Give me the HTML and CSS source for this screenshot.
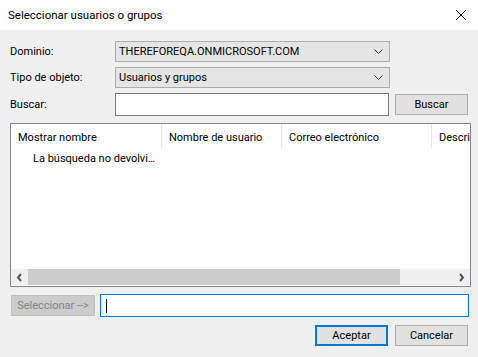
FILE: index.html
```
<!DOCTYPE html>
<html lang="es">
<head>
<meta charset="utf-8">
<title>Seleccionar usuarios o grupos</title>
<link rel="stylesheet" href="styles.css">
</head>
<body>
<div class="dialog">
  <div class="titlebar">
    <span class="title">Seleccionar usuarios o grupos</span>
    <svg class="close" width="12" height="12" viewBox="0 0 12 12"><path d="M1 1 L11 11 M11 1 L1 11" stroke="#000" stroke-width="1" fill="none"/></svg>
  </div>
  <div class="body">
    <div class="row row-combo">
      <span class="label">Dominio:</span>
      <div class="combo"><span class="combo-text">THEREFOREQA.ONMICROSOFT.COM</span><svg class="chev" width="9" height="5" viewBox="0 0 9 5"><path d="M0.5 0.5 L4.5 4.5 L8.5 0.5" stroke="#333" stroke-width="1" fill="none"/></svg></div>
    </div>
    <div class="row row-combo">
      <span class="label">Tipo de objeto:</span>
      <div class="combo"><span class="combo-text">Usuarios y grupos</span><svg class="chev" width="9" height="5" viewBox="0 0 9 5"><path d="M0.5 0.5 L4.5 4.5 L8.5 0.5" stroke="#333" stroke-width="1" fill="none"/></svg></div>
    </div>
    <div class="row row-search">
      <span class="label">Buscar:</span>
      <div class="input"></div>
      <div class="btn btn-search">Buscar</div>
    </div>
    <div class="list">
      <div class="list-head">
        <div class="col col1">Mostrar nombre</div>
        <div class="col col2">Nombre de usuario</div>
        <div class="col col3">Correo electrónico</div>
        <div class="col col4">Descripción</div>
      </div>
      <div class="list-body">
        <div class="list-row">La búsqueda no devolvi…</div>
      </div>
      <div class="hscroll">
        <div class="arrow"><svg width="7" height="9" viewBox="0 0 7 9"><path d="M5 1 L2 4.5 L5 8" stroke="#555" stroke-width="2" fill="none"/></svg></div>
        <div class="thumb"></div>
        <div class="track"></div>
        <div class="arrow"><svg width="7" height="9" viewBox="0 0 7 9"><path d="M2 1 L5 4.5 L2 8" stroke="#555" stroke-width="2" fill="none"/></svg></div>
      </div>
    </div>
    <div class="row row-select">
      <div class="btn btn-disabled">Seleccionar --&gt;</div>
      <div class="input input-focus"><span class="caret"></span></div>
    </div>
    <div class="row row-actions">
      <div class="btn btn-default">Aceptar</div>
      <div class="btn">Cancelar</div>
    </div>
  </div>
</div>
</body>
</html>
```
FILE: styles.css
```
html, body {
  margin: 0;
  padding: 0;
}
body {
  width: 478px;
  height: 357px;
  background: #f0f0f0;
  font-family: Roboto, "Noto Sans", "Liberation Sans", sans-serif;
  font-size: 11px;
  color: #000;
  overflow: hidden;
}
.dialog {
  width: 478px;
  height: 357px;
  display: flex;
  flex-direction: column;
}
.titlebar {
  height: 30px;
  background: #fff;
  display: flex;
  align-items: center;
  padding-left: 8px;
  padding-right: 11px;
  box-sizing: border-box;
}
.title {
  flex: 1;
  font-size: 11.5px;
}
.close {
  display: block;
}
.body {
  padding: 11px 0 0 10px;
  display: flex;
  flex-direction: column;
}
.row {
  display: flex;
  align-items: center;
}
.label {
  width: 105px;
}
.row-combo {
  height: 21px;
  margin-bottom: 5px;
}
.combo {
  width: 275px;
  height: 21px;
  box-sizing: border-box;
  border: 1px solid #adadad;
  background: #e5e5e5;
  display: flex;
  align-items: center;
  padding: 0 6px 0 3px;
}
.combo-text {
  flex: 1;
}
.chev {
  display: block;
}
.row-search {
  height: 23px;
  margin-bottom: 7px;
}
.input {
  width: 274px;
  height: 23px;
  box-sizing: border-box;
  border: 1px solid #7a7a7a;
  background: #fff;
}
.btn {
  width: 73px;
  height: 21px;
  box-sizing: border-box;
  border: 1px solid #adadad;
  background: #e1e1e1;
  display: flex;
  align-items: center;
  justify-content: center;
}
.btn-search {
  margin-left: 6px;
}
.list {
  width: 461px;
  height: 164px;
  box-sizing: border-box;
  border: 1px solid #828790;
  background: #fff;
  display: flex;
  flex-direction: column;
}
.list-head {
  display: flex;
  height: 24px;
  overflow: hidden;
}
.col {
  flex: none;
  box-sizing: border-box;
  padding-left: 7px;
  padding-top: 2px;
  border-right: 1px solid #e5e5e5;
  display: flex;
  align-items: center;
  white-space: nowrap;
  overflow: hidden;
}
.col1 { width: 151px; }
.col2 { width: 120px; }
.col3 { width: 150px; }
.col4 { width: 38px; border-right: none; }
.list-body {
  flex: 1;
}
.list-row {
  padding-left: 22px;
  height: 20px;
  display: flex;
  align-items: center;
}
.hscroll {
  height: 16px;
  display: flex;
  margin-bottom: 1px;
}
.arrow {
  width: 17px;
  background: #f0f0f0;
  display: flex;
  align-items: center;
  justify-content: center;
}
.thumb {
  width: 372px;
  background: #cdcdcd;
}
.track {
  flex: 1;
  background: #f0f0f0;
}
.row-select {
  margin-top: 7px;
  height: 23px;
}
.btn-disabled {
  width: 84px;
  margin-left: 1px;
  background: #cccccc;
  border-color: #bfbfbf;
  color: #838383;
}
.input-focus {
  width: 369px;
  margin-left: 5px;
  border-color: #0078d7;
  display: flex;
  align-items: center;
  padding-left: 5px;
}
.caret {
  width: 1px;
  height: 14px;
  background: #000;
}
.row-actions {
  margin-top: 8px;
  justify-content: flex-end;
  padding-right: 10px;
  gap: 7px;
}
.btn-default {
  border: 2px solid #0078d7;
}
```
